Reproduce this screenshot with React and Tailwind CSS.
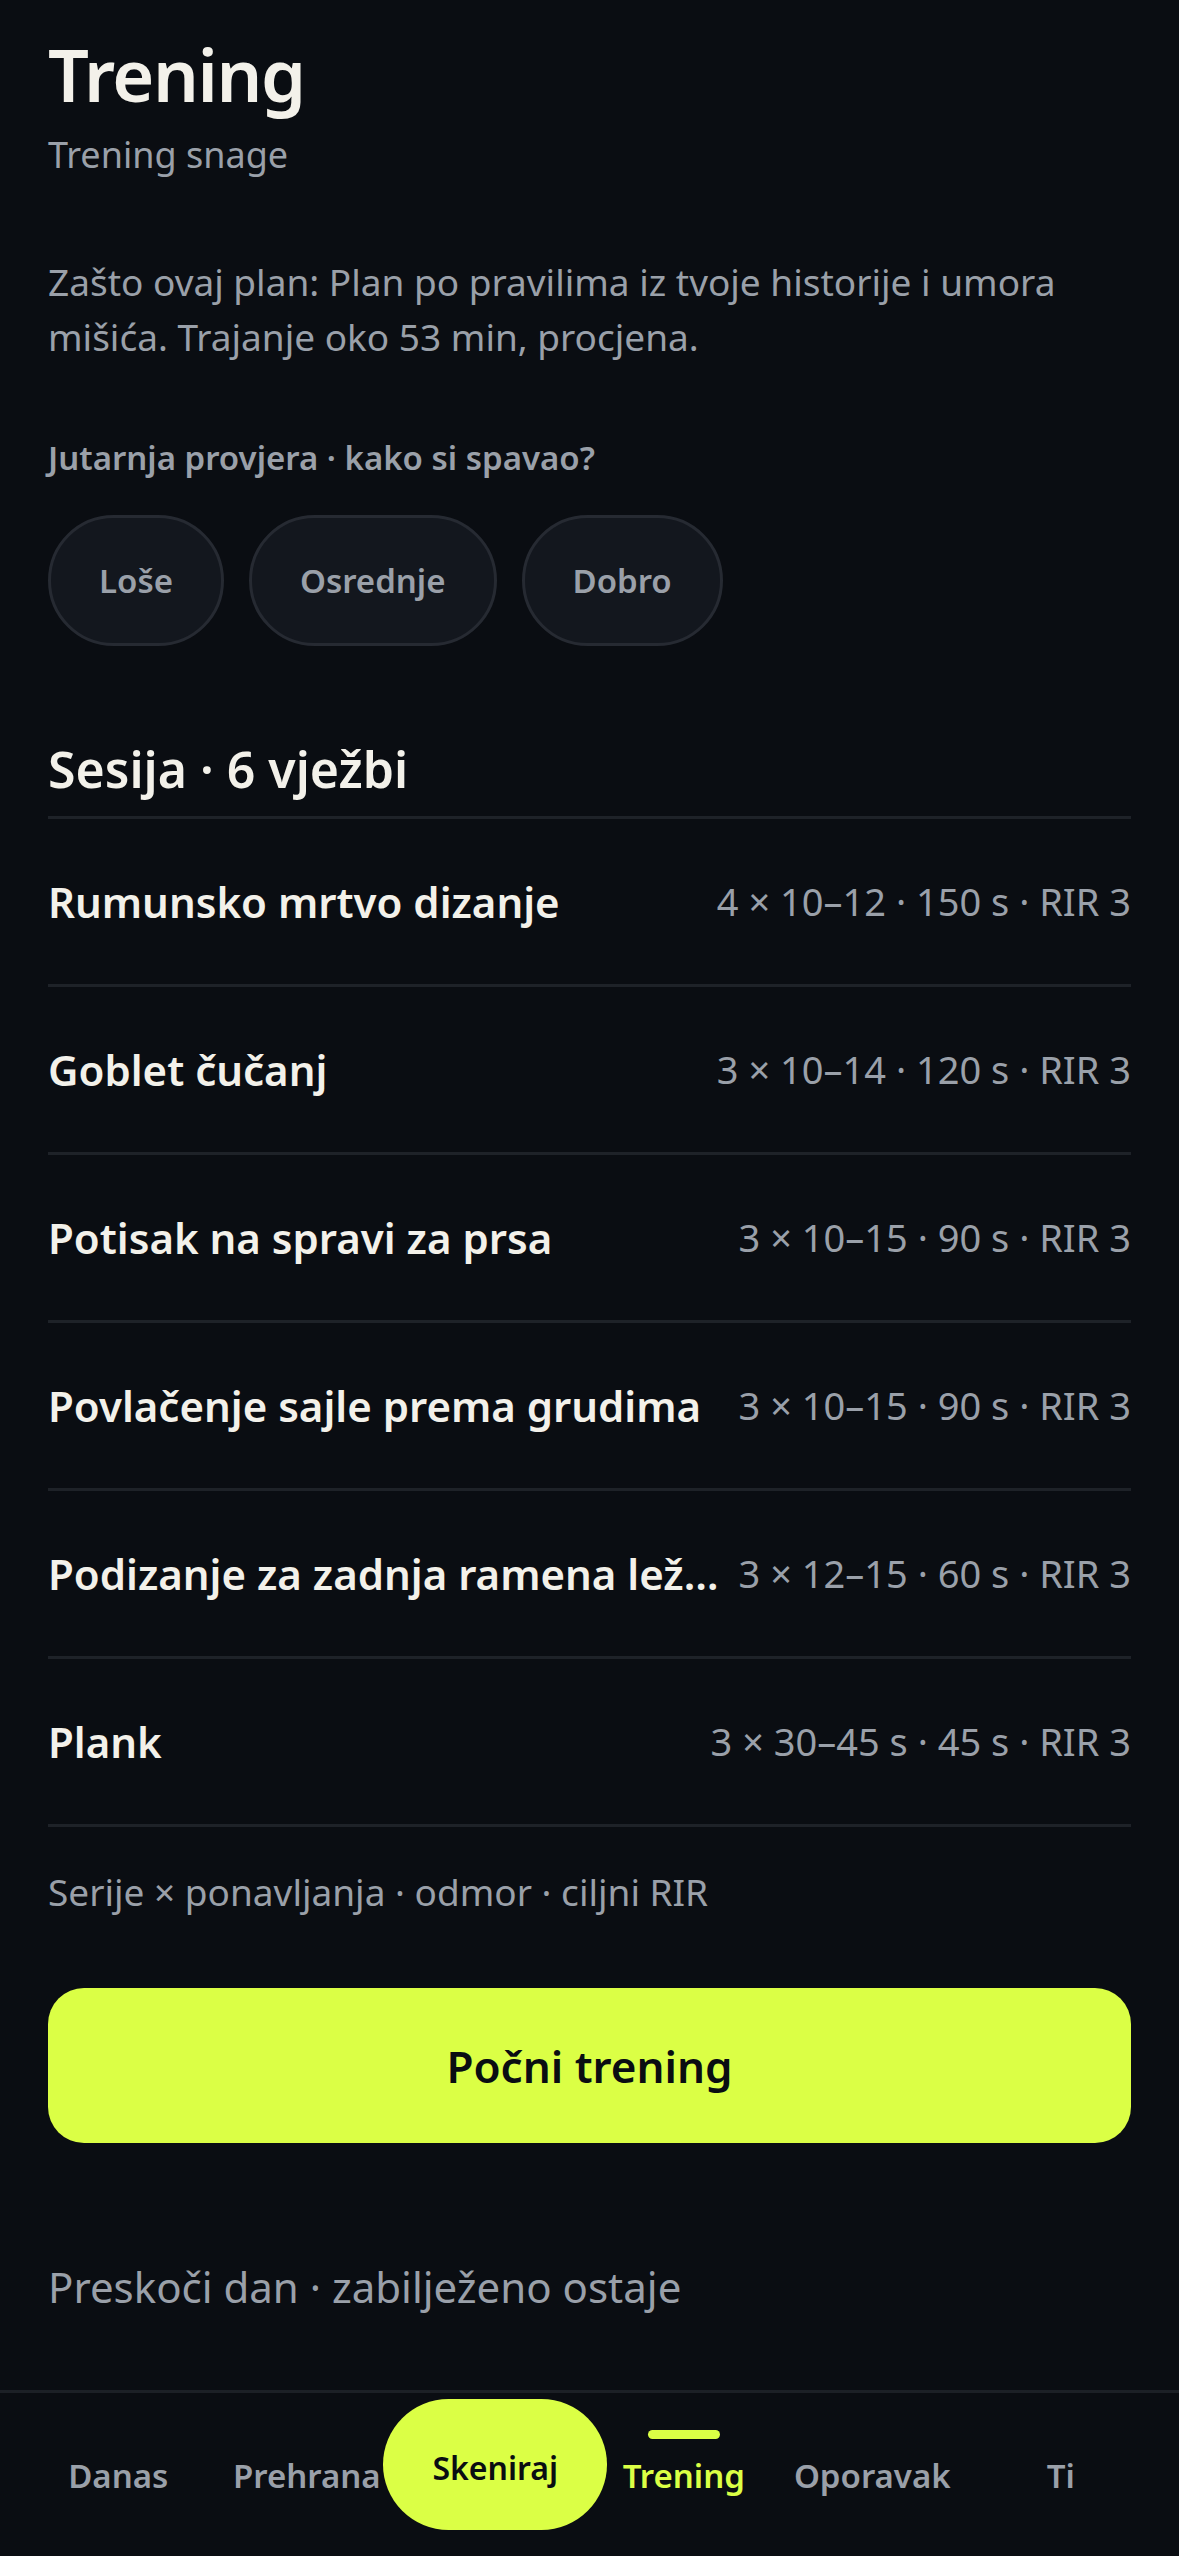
import React from "react";

const rows = [
  ["Rumunsko mrtvo dizanje", "4 × 10–12 · 150 s · RIR 3"],
  ["Goblet čučanj", "3 × 10–14 · 120 s · RIR 3"],
  ["Potisak na spravi za prsa", "3 × 10–15 · 90 s · RIR 3"],
  ["Povlačenje sajle prema grudima", "3 × 10–15 · 90 s · RIR 3"],
  ["Podizanje za zadnja ramena ležeći", "3 × 12–15 · 60 s · RIR 3"],
  ["Plank", "3 × 30–45 s · 45 s · RIR 3"],
];

const navItems = ["Danas", "Prehrana", "Skeniraj", "Trening", "Oporavak", "Ti"];

export default function App() {
  return (
    <div
      className="min-h-[2556px] w-[1179px] bg-[#0a0d12] flex flex-col"
      style={{ fontFamily: '"Noto Sans", "Open Sans", sans-serif' }}
    >
      <main className="flex-1 px-[48px] pt-[29px]">
        <h1 className="text-[72px] leading-[90px] font-semibold text-[#f3f1ea] tracking-[-0.02em]">
          Trening
        </h1>
        <p className="mt-[9px] text-[36px] leading-[54px] text-[#9aa0a9]">Trening snage</p>
        <p className="mt-[72px] text-[37px] leading-[55px] text-[#9aa0a9]">
          Zašto ovaj plan: Plan po pravilima iz tvoje historije i umora mišića. Trajanje oko 53 min, procjena.
        </p>
        <p className="mt-[69px] text-[33px] leading-[50px] font-semibold text-[#9aa0a9]">
          Jutarnja provjera · kako si spavao?
        </p>
        <div className="mt-[32px] flex gap-[25px]">
          {["Loše", "Osrednje", "Dobro"].map((t) => (
            <button
              key={t}
              className="h-[131px] px-[48px] rounded-full bg-[#13171e] border-[3px] border-[#262a32] text-[33px] font-semibold text-[#9aa0a9]"
            >
              {t}
            </button>
          ))}
        </div>
        <h2 className="mt-[88px] text-[50px] leading-[70px] font-semibold text-[#f3f1ea] pb-[12px] border-b-[3px] border-[#1e2228]">
          Sesija · 6 vježbi
        </h2>
        <div>
          {rows.map(([name, meta]) => (
            <div
              key={name}
              className="h-[168px] flex items-center gap-[20px] border-b-[3px] border-[#1e2228]"
            >
              <span className="flex-1 min-w-0 truncate text-[42px] font-semibold text-[#f3f1ea]">{name}</span>
              <span className="shrink-0 whitespace-nowrap text-[38px] text-[#9aa0a9]">{meta}</span>
            </div>
          ))}
        </div>
        <p className="mt-[38px] text-[37px] leading-[54px] text-[#9aa0a9]">
          Serije × ponavljanja · odmor · ciljni RIR
        </p>
        <button className="mt-[69px] w-full h-[155px] rounded-[36px] bg-[#dbff45] text-[44px] font-semibold text-[#0a0d12]">
          Počni trening
        </button>
        <p className="mt-[114px] text-[42px] leading-[60px] text-[#9aa0a9]">
          Preskoči dan · zabilježeno ostaje
        </p>
      </main>
      <nav className="h-[166px] border-t-[3px] border-[#1c2026] px-[24px] grid grid-cols-6">
        {navItems.map((n) => {
          if (n === "Skeniraj") {
            return (
              <div key={n} className="flex justify-center">
                <div className="mt-[6px] w-[224px] h-[131px] shrink-0 rounded-full bg-[#dbff45] flex items-center justify-center pt-[6px] text-[32px] font-semibold text-[#0a0d12]">
                  {n}
                </div>
              </div>
            );
          }
          if (n === "Trening") {
            return (
              <div key={n} className="flex flex-col items-center pt-[37px]">
                <div className="w-[72px] h-[9px] rounded-full bg-[#dbff45]" />
                <span className="mt-[14px] text-[33px] leading-[46px] font-semibold text-[#dbff45]">{n}</span>
              </div>
            );
          }
          return (
            <div key={n} className="flex flex-col items-center pt-[60px]">
              <span className="text-[33px] leading-[46px] font-semibold text-[#9aa0a9]">{n}</span>
            </div>
          );
        })}
      </nav>
    </div>
  );
}
